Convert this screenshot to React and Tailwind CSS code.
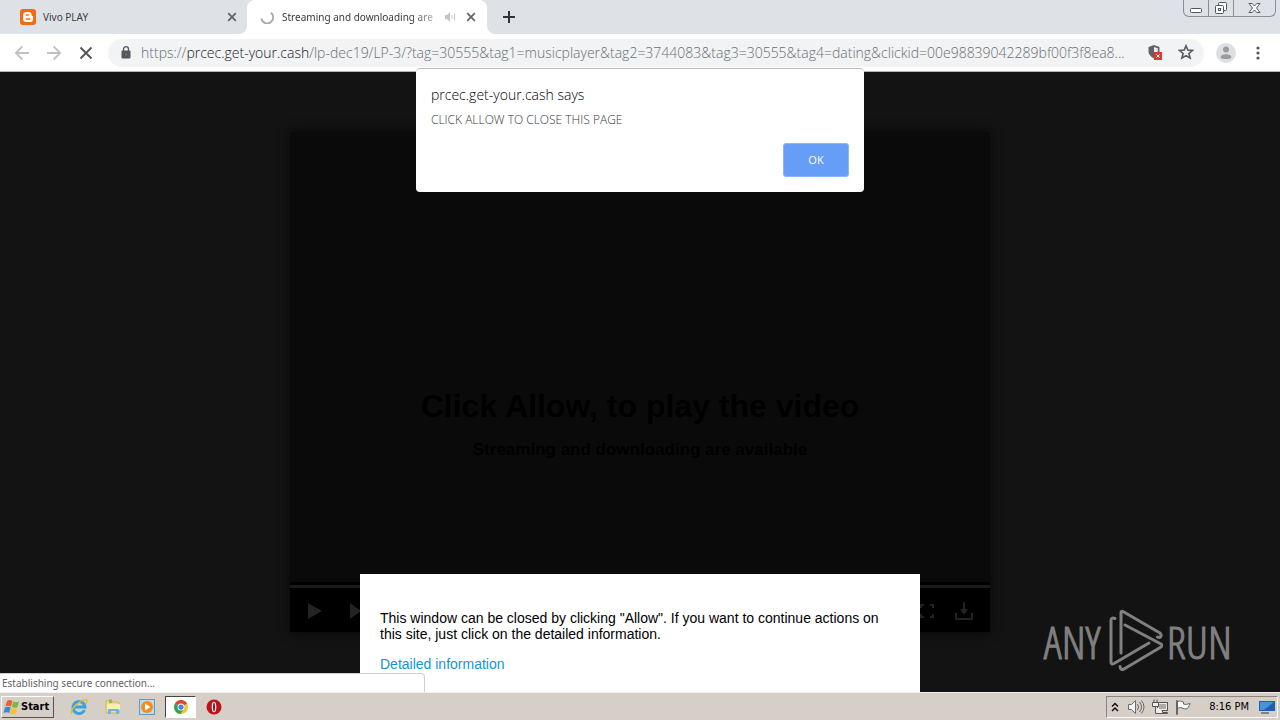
import React from "react";

const ui = "font-['Noto_Sans',sans-serif]";

function CloseGlyph({ className }) {
  return (
    <svg viewBox="0 0 10 10" className={className} fill="none" stroke="currentColor">
      <path d="M1.2 1.2l7.6 7.6M8.8 1.2L1.2 8.8" strokeWidth="1.7" />
    </svg>
  );
}

function BloggerIcon() {
  return (
    <svg viewBox="0 0 16 16" className="size-4 shrink-0">
      <rect width="16" height="16" rx="3" fill="#f5690f" />
      <path d="M6.3 3h2.3a3 3 0 0 1 3 3c0 .9.3 1 .8 1 .5 0 .7.3.7.8v2.1a3.1 3.1 0 0 1-3.1 3.1H6.300a3.200 3.200 0 0 1-3.200-3.200V6.200A3.200 3.200 0 0 1 6.300 3z" fill="#fff" />
      <path d="M6.300 6h2M6.300 10h3.500" stroke="#f5690f" strokeWidth="1.300" strokeLinecap="round" />
    </svg>
  );
}

function TabStrip() {
  return (
    <div className="flex h-[34px] shrink-0 items-stretch bg-[#dee1e6] text-[#3c4043]">
      <div className="flex w-[247px] items-center pr-2.5 pl-5">
        <BloggerIcon />
        <span className="ml-[7px] flex-1 text-[10px]">Vivo PLAY</span>
        <button aria-label="Close Vivo PLAY" className="text-[#5f6368]"><CloseGlyph className="size-2.5" /></button>
      </div>
      <div className="relative flex w-[240px] items-center rounded-t-lg bg-white pr-[11px] pl-[13px]">
        <svg viewBox="0 0 8 8" className="absolute bottom-0 -left-2 size-2"><path d="M8 0v8H0a8 8 0 0 0 8-8z" fill="#fff" /></svg>
        <svg viewBox="0 0 8 8" className="absolute -right-2 bottom-0 size-2"><path d="M0 0v8h8a8 8 0 0 1-8-8z" fill="#fff" /></svg>
        <svg viewBox="0 0 14 14" className="size-3.5 shrink-0" fill="none" stroke="#a5a8ac" strokeWidth="1.800">
          <path d="M11 2.800A6 6 0 1 1 1.300 8.500" />
        </svg>
        <span className="ml-2 bg-linear-to-r from-[#303337] from-85% to-[#b0b0b0] bg-clip-text text-[10px] whitespace-nowrap text-transparent">Streaming and downloading are</span>
        <svg viewBox="0 0 12 12" className="mr-2.5 ml-auto size-3 shrink-0" fill="none" stroke="#c3c5c8">
          <path d="M1 4h2l3-3v10L3 8H1z" fill="#c3c5c8" stroke="none" />
          <path d="M8 4v4M10.500 2.500v7" />
        </svg>
        <button aria-label="Close current tab" className="text-[#5f6368]"><CloseGlyph className="size-2.5" /></button>
      </div>
      <button aria-label="New tab" className="ml-4 self-center text-[#303338]">
        <svg viewBox="0 0 12 12" className="size-3" stroke="currentColor" strokeWidth="2"><path d="M6 0v12M0 6h12" /></svg>
      </button>
      <div className="mr-1 ml-auto flex h-[17px] divide-x divide-[#8b8e94] rounded-b-md border border-t-0 border-[#8b8e94] text-[#53565c]">
        <button aria-label="Minimize" className="flex w-[25px] items-center justify-center pt-1">
          <svg viewBox="0 0 12 5" className="h-[5px] w-3" fill="#fff" stroke="currentColor"><rect x=".5" y=".5" width="11" height="4" rx="1" /></svg>
        </button>
        <button aria-label="Restore" className="flex w-[25px] items-center justify-center">
          <svg viewBox="0 0 14 14" className="size-3.5" fill="#fff" stroke="currentColor">
            <rect x="4.500" y="1.500" width="8" height="8" rx="1" /><rect x="1.500" y="4.500" width="8" height="8" rx="1" /><rect x="4.500" y="7.500" width="2" height="2" />
          </svg>
        </button>
        <button aria-label="Close window" className="flex w-[41px] items-center justify-center">
          <svg viewBox="0 0 13 12" className="h-3 w-[13px]" fill="#fff" stroke="currentColor"><path d="M1 1.500h3.200L6.500 4l2.300-2.500H12L8.500 6l3.500 4.500H8.800L6.500 8l-2.300 2.500H1L4.500 6z" /></svg>
        </button>
      </div>
    </div>
  );
}

function Toolbar() {
  return (
    <div className="flex h-[38px] shrink-0 items-center border-b border-[#b5b5b5] bg-white pr-3.5 pl-3.5">
      <button aria-label="Back" className="text-[#bfc1c4]">
        <svg viewBox="0 0 16 16" className="size-4" fill="none" stroke="currentColor" strokeWidth="1.800"><path d="M15 8H2M8.300 1.500L1.800 8l6.500 6.500" /></svg>
      </button>
      <button aria-label="Forward" className="ml-4 text-[#bfc1c4]">
        <svg viewBox="0 0 16 16" className="size-4" fill="none" stroke="currentColor" strokeWidth="1.800"><path d="M1 8h13M7.700 1.500L14.200 8l-6.500 6.500" /></svg>
      </button>
      <button aria-label="Stop loading" className="ml-4 text-[#505357]">
        <svg viewBox="0 0 16 16" className="size-4" fill="none" stroke="currentColor" strokeWidth="1.800"><path d="M2.500 2.500l11 11M13.500 2.500l-11 11" /></svg>
      </button>
      <div className="ml-3.5 flex h-7 min-w-0 flex-1 items-center rounded-full bg-[#f1f3f4] pr-2.5 pb-px pl-[13px]">
        <svg viewBox="0 0 10 13" className="h-[13px] w-2.5 shrink-0"><rect x=".5" y="4.500" width="9" height="8" rx="1" fill="#55585c" /><path d="M2.500 5V3.200a2.500 2.500 0 0 1 5 0V5" fill="none" stroke="#55585c" strokeWidth="1.300" /><circle cx="5" cy="8.500" r="1" fill="#777" /></svg>
        <span className="ml-2.5 min-w-0 flex-1 overflow-hidden font-['Open_Sans','Noto_Sans',sans-serif] text-[14px] font-light whitespace-nowrap text-[#6a6e73]">
          https://<span className="text-[#17191c]">prcec.get-your.cash</span>/lp-dec19/LP-3/?tag=30555&amp;tag1=musicplayer&amp;tag2=3744083&amp;tag3=30555&amp;tag4=dating&amp;clickid=00e98839042289bf00f3f8ea8...
        </span>
        <svg viewBox="0 0 16 16" className="ml-3 size-4 shrink-0">
          <path d="M7 1l5.500 2v4.500c0 3-2.500 5.500-5.500 7-3-1.500-5.500-4-5.500-7V3z" fill="#5f6368" />
          <path d="M7 3v9.500c2-1.200 3.800-3 3.800-5V4.300z" fill="#e8eaed" />
          <rect x="7" y="8" width="8" height="8" fill="#d93a30" /><path d="M9.500 10.500l3 3M12.500 10.500l-3 3" stroke="#fff" />
        </svg>
        <button aria-label="Bookmark this page" className="ml-[15px] text-[#54575b]">
          <svg viewBox="0 0 16 16" className="size-4" fill="none" stroke="currentColor" strokeWidth="1.600"><path d="M8 1.800l1.800 4.300 4.700.4-3.600 3 1.200 4.600L8 11.600l-4.100 2.500L5.100 9.500l-3.600-3 4.700-.4z" /></svg>
        </button>
      </div>
      <button aria-label="Profile" className="ml-3">
        <svg viewBox="0 0 20 20" className="size-5"><circle cx="10" cy="10" r="10" fill="#dedfe1" /><circle cx="10" cy="6.500" r="3" fill="#999ca0" /><path d="M4.500 14.500c0-4.500 11-4.500 11 0-1.500 2-9.500 2-11 0z" fill="#999ca0" /></svg>
      </button>
      <button aria-label="Menu" className="ml-3.5">
        <svg viewBox="0 0 16 16" className="size-4" fill="#54575b"><circle cx="8" cy="3" r="1.600" /><circle cx="8" cy="8" r="1.600" /><circle cx="8" cy="13" r="1.600" /></svg>
      </button>
    </div>
  );
}

function Player() {
  return (
    <section className="mx-auto mt-15 flex h-[500px] w-[700px] flex-col bg-[#0a0a0a] text-center font-['Liberation_Sans',sans-serif] font-bold text-black shadow-[0_0_10px_#080808]">
      <div className="flex flex-1 flex-col items-center pt-[254px]">
        <h1 className="text-[32px] leading-10">Click Allow, to play the video</h1>
        <p className="mt-3 text-[17px] leading-6">Streaming and downloading are available</p>
      </div>
      <div className="h-[7px] border-t-3 border-b border-black bg-[#1a1a1a]" />
      <div className="flex h-[43px] items-center bg-black pr-[17px] pl-[18px] text-[#232323]">
        <button aria-label="Play"><svg viewBox="0 0 14 16" className="h-4 w-3.5" fill="currentColor"><path d="M0 0l14 8-14 8z" /></svg></button>
        <button aria-label="Next" className="ml-7"><svg viewBox="0 0 14 16" className="h-4 w-3.5" fill="currentColor"><path d="M0 0l11 8-11 8zM11 0h3v16h-3z" /></svg></button>
        <button aria-label="Full screen" className="ml-auto"><svg viewBox="0 0 16 16" className="size-4" fill="none" stroke="currentColor" strokeWidth="2"><path d="M2 5V2h3M11 2h3v3M14 11v3h-3M5 14H2v-3" /></svg></button>
        <button aria-label="Download" className="ml-5"><svg viewBox="0 0 18 18" className="size-[18px]" fill="none" stroke="currentColor" strokeWidth="2"><path d="M1 11v6h16v-6M9 0v8" /><path d="M5 7h8l-4 6z" fill="currentColor" stroke="none" /></svg></button>
      </div>
    </section>
  );
}

function Watermark() {
  return (
    <div aria-label="ANY RUN" className="absolute right-12 bottom-[19px] flex items-center font-['Open_Sans_Condensed_Light','Open_Sans_Condensed','Roboto_Condensed','Liberation_Sans_Narrow',sans-serif] text-[45px] leading-none font-light text-[#808080] [-webkit-text-stroke:1px_#808080]">
      <span>ANY</span>
      <svg viewBox="0 0 56 64" className="mr-1 ml-1.5 h-16 w-14" fill="none" stroke="#808080" strokeWidth="3" strokeLinecap="round" strokeLinejoin="round">
        <path d="M14 44V4q0-2.500 2-1.500L53 24q2 2 .5 4-1 1-3 0" />
        <path d="M8 9.500Q4 8 4 11.500V53q0 3 3 1.500L42 34" />
        <path d="M13 57.500q.5 4 4 2.500L54 38q2-1.500 0-3L18 16" />
      </svg>
      <span>RUN</span>
    </div>
  );
}

function Page() {
  return (
    <main className="relative min-h-0 flex-1 overflow-hidden bg-[#131313]">
      <Player />
      <Watermark />
      <section className="absolute bottom-0 left-1/2 h-[118px] w-[560px] -translate-x-1/2 bg-white px-5 pt-9 font-['Liberation_Sans',sans-serif] text-[14px] leading-4 text-black">
        <p>This window can be closed by clicking "Allow". If you want to continue actions on this site, just click on the detailed information.</p>
        <a href="#details" className="mt-3.5 block text-[#1694d2]">Detailed information</a>
      </section>
      <div role="status" className={`absolute bottom-0 left-0 h-[19px] w-[425px] rounded-tr-sm border-t border-r border-[#d0d0d0] bg-white pl-0.5 text-[10px] leading-[18px] text-[#626262] ${ui}`}>Establishing secure connection...</div>
    </main>
  );
}

function AlertDialog() {
  return (
    <div role="alertdialog" aria-labelledby="alert-title" className="absolute top-[68px] left-1/2 h-31 w-[448px] -translate-x-1/2 rounded-sm border-t border-[#bcbcbc] bg-white px-[15px] pt-4 font-['Open_Sans',sans-serif] font-light">
      <h2 id="alert-title" className="text-[14px] leading-5 text-black">prcec.get-your.cash says</h2>
      <p className="mt-[5px] text-[12px] leading-5 text-[#35383b]">CLICK ALLOW TO CLOSE THIS PAGE</p>
      <div className="mt-[13px] flex justify-end">
        <button className="h-[34px] w-[66px] rounded-[3px] border border-[#8ab5f8] bg-[#669df6] text-[11px] font-normal text-white">OK</button>
      </div>
    </div>
  );
}

function Taskbar() {
  return (
    <footer className={`flex h-7 shrink-0 items-center border-t border-[#f4f2ee] bg-[#d6cfc7] pt-px text-[11px] text-black ${ui}`}>
      <button className="ml-px flex h-[22px] w-[53px] items-center border border-t-white border-r-[#555] border-b-[#555] border-l-white pl-px font-['DejaVu_Sans_Condensed',sans-serif] text-[11px] font-bold">
        <svg viewBox="0 0 18 16" className="h-4 w-[18px]">
          <path d="M4 2c2-1.500 4-1 5.500 0L8 7.500C6 6.300 4 6.500 2.300 7.500z" fill="#e8622c" />
          <path d="M10.300 2.500c2 1 4 .8 5.700-.3L14.500 8c-2 1-4 .8-5.700-.2z" fill="#79b843" />
          <path d="M2 8.500c2-1 4-1 5.700 0L6.200 14C4.500 13 2.500 13 .5 14z" fill="#3c86d8" />
          <path d="M8.500 8.800c2 1 4 1 5.700.2L12.700 14.500c-2 1-4 .8-5.700-.2z" fill="#f5c42b" />
        </svg>
        Start
      </button>
      <button aria-label="Internet Explorer" className="ml-4">
        <svg viewBox="0 0 18 18" className="size-[18px]" fill="none"><path d="M14.500 12a6 6 0 1 1 .5-3H4.500" stroke="#36a5e4" strokeWidth="3" /><path d="M2 15.500C-1 12 11 .5 16.500 2c1 .5.500 2-.5 3.500" stroke="#e6b82e" strokeWidth="1.400" /></svg>
      </button>
      <button aria-label="File Explorer" className="ml-4">
        <svg viewBox="0 0 18 18" className="size-[18px]"><path d="M2 3l5-1 1 2h7v11H2z" fill="#f2dc80" stroke="#c9aa46" strokeWidth=".7" /><path d="M5 1.500h3V5H5z" fill="#89ba65" /><path d="M3 6h13v6H3z" fill="#fbf0ae" /><path d="M4 16v-5h11v5h-3v-3H7v3z" fill="#6eb6df" /></svg>
      </button>
      <button aria-label="Media Player" className="ml-4">
        <svg viewBox="0 0 18 18" className="size-[18px]"><rect x="1.500" y="1.500" width="15" height="15" fill="#bcdcf1" stroke="#579bd0" /><circle cx="9" cy="9" r="6" fill="#f38b1d" /><path d="M7 5.500l5.500 3.500L7 12.500z" fill="#fff" /></svg>
      </button>
      <button aria-label="Chrome" className="ml-[9px] flex h-[22px] w-[31px] items-center justify-center border border-t-[#444] border-r-white border-b-white border-l-[#444] bg-white">
        <svg viewBox="0 0 16 16" className="size-3.5"><circle cx="8" cy="8" r="8" fill="#f5c62b" /><path d="M8 8L1.100 4a8 8 0 0 1 13.800 0z" fill="#df4534" /><path d="M8 8L1.100 4A8 8 0 0 0 7.500 16L11.500 10z" fill="#36a154" /><circle cx="8" cy="8" r="4" fill="#fff" /><circle cx="8" cy="8" r="3" fill="#4285e8" /></svg>
      </button>
      <button aria-label="Opera" className="ml-[9px]">
        <svg viewBox="0 0 18 18" className="size-[18px]"><circle cx="9" cy="9" r="7.500" fill="#bd1219" /><ellipse cx="9" cy="9" rx="2.300" ry="5.300" fill="#fff" /><ellipse cx="9" cy="9" rx="1" ry="4.500" fill="#a11117" /></svg>
      </button>
      <div className="mr-0.5 ml-auto flex h-[22px] w-[172px] items-center border border-t-[#8b867f] border-r-white border-b-white border-l-[#8b867f] pl-1">
        <svg viewBox="0 0 8 10" className="h-2.5 w-2" fill="none" stroke="#111" strokeWidth="1.500"><path d="M1 4.500l3-3 3 3M1 9l3-3 3 3" /></svg>
        <svg viewBox="0 0 18 16" className="ml-2 h-4 w-[18px]" fill="#f5f5f5" stroke="#6b6b6b"><path d="M1.500 5.500h3l4-4v13l-4-4h-3z" /><path d="M10.500 5q2 3 0 6M12.500 3q4 5 0 10M14.500 1.500q5 6.500 0 13" fill="none" /></svg>
        <svg viewBox="0 0 18 16" className="ml-1.5 h-4 w-[18px]" fill="#eee" stroke="#555"><rect x="6.500" y="3.500" width="10" height="8" /><path d="M8 5h7v5H8z" fill="#aaa" stroke="none" /><path d="M3 .500v3M6 .500v3M1.500 3.500h6v4h-6zM4.500 8v6.500h12v-1h-5V12" /></svg>
        <svg viewBox="0 0 16 16" className="ml-1.5 size-4" fill="#fafafa" stroke="#666"><path d="M1.500 15.500v-14h1v14zM2.500 2.500c3-1 4 0 6 .5v2c2 1 4 0 6.500-.5-1 3-2 4-2.500 5-2 1-4 0-5.500-.5-2-1-3 0-4.500.5z" /></svg>
        <span className="ml-auto font-['DejaVu_Sans_Condensed',sans-serif]">8:16 PM</span>
        <svg viewBox="0 0 16 14" className="mr-0.5 ml-2.5 h-3.5 w-4"><path d="M0 1h16v10H0z" fill="#1c5fb4" /><path d="M1 2h14L5 10H1z" fill="#4b91da" /><path d="M2 13h8" stroke="#333" /></svg>
      </div>
    </footer>
  );
}

export default function App() {
  return (
    <div className={`relative flex h-screen flex-col overflow-hidden ${ui}`}>
      <TabStrip />
      <Toolbar />
      <Page />
      <Taskbar />
      <AlertDialog />
    </div>
  );
}
